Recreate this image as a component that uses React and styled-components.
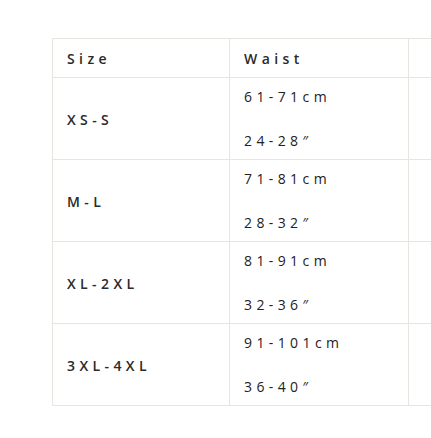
import React from "react";
import styled, { createGlobalStyle } from "styled-components";

const sizes = [
  { label: "XS-S", cm: "61-71cm", inch: "24-28″" },
  { label: "M-L", cm: "71-81cm", inch: "28-32″" },
  { label: "XL-2XL", cm: "81-91cm", inch: "32-36″" },
  { label: "3XL-4XL", cm: "91-101cm", inch: "36-40″" },
];

const App = () => {
  return (
    <>
      <GlobalStyle />
      <Page>
        <Table>
          <HeadCell>Size</HeadCell>
          <HeadCell>Waist</HeadCell>
          <HeadCell />
          {sizes.map((row) => (
            <React.Fragment key={row.label}>
              <LabelCell>{row.label}</LabelCell>
              <ValueCell>
                <Value>{row.cm}</Value>
                <Value>{row.inch}</Value>
              </ValueCell>
              <ValueCell />
            </React.Fragment>
          ))}
        </Table>
      </Page>
    </>
  );
};

const GlobalStyle = createGlobalStyle`
  body {
    margin: 0;
    background: #fff;
    overflow: hidden;
    font-family: "Open Sans", "Noto Sans", sans-serif;
  }
`;
const Page = styled.div`
  padding: 38px 0 0 52px;
  overflow: hidden;
`;
const Table = styled.div`
  display: grid;
  grid-template-columns: 177px 179px 179px;
  grid-template-rows: 39px repeat(4, 82px);
  border-top: 1px solid #e6e6e1;
  border-left: 1px solid #e6e6e1;
  width: max-content;
`;
const Cell = styled.div`
  border-right: 1px solid #e6e6e1;
  border-bottom: 1px solid #e6e6e1;
  padding: 0 14px;
  font-size: 14px;
  letter-spacing: 4.4px;
  white-space: nowrap;
`;
const HeadCell = styled(Cell)`
  display: flex;
  align-items: center;
  color: #2a2a2a;
  font-weight: 600;
`;
const LabelCell = styled(Cell)`
  display: flex;
  align-items: center;
  padding-top: 2px;
  color: #2a2a2a;
  font-weight: 600;
`;
const ValueCell = styled(Cell)`
  display: flex;
  flex-direction: column;
  justify-content: space-between;
  padding-top: 8px;
  padding-bottom: 7px;
  color: #222;
`;
const Value = styled.div`
  line-height: 22px;
`;

export default App;
